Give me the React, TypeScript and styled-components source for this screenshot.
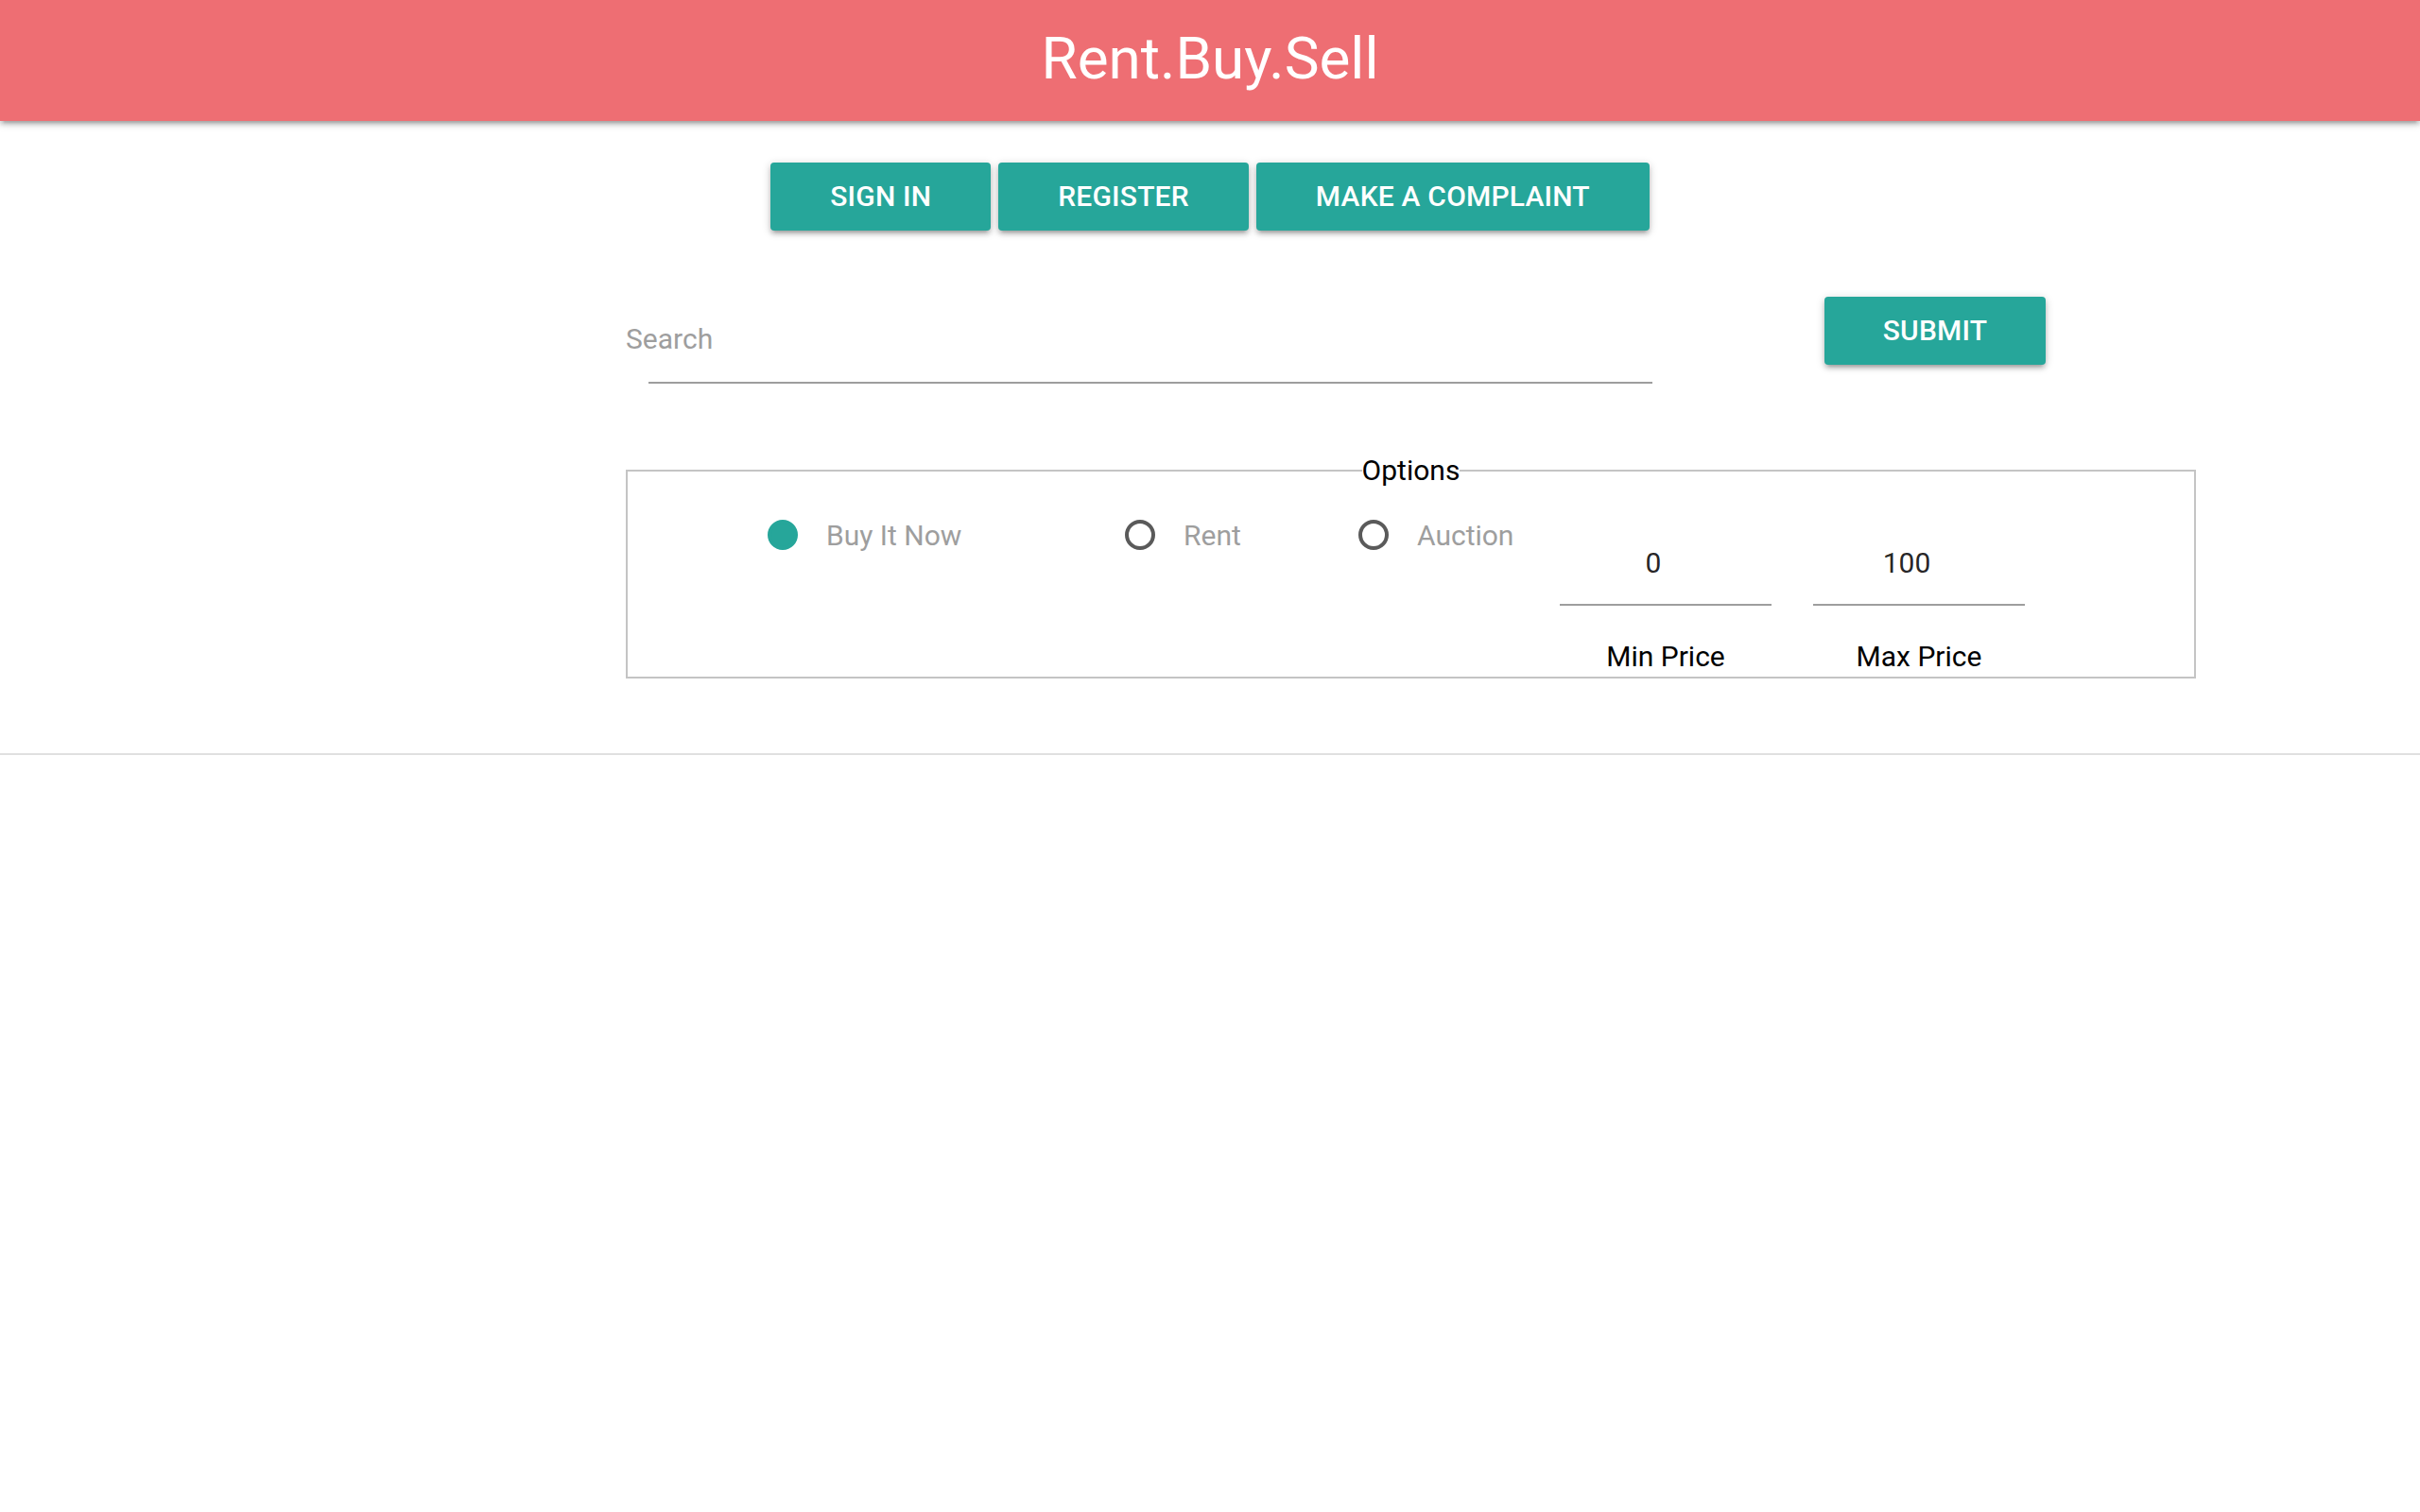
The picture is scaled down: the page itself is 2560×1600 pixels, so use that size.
import React from "react";
import styled, { createGlobalStyle } from "styled-components";

const GlobalStyle = createGlobalStyle`
  html, body {
    margin: 0;
    padding: 0;
    background: #ffffff;
    font-family: Roboto, "Liberation Sans", Arial, sans-serif;
    color: rgba(0, 0, 0, 0.87);
  }
  * { box-sizing: border-box; }
`;

const Page = styled.div`
  width: 2560px;
  min-height: 1600px;
  display: flex;
  flex-direction: column;
`;

const Header = styled.header`
  height: 128px;
  background: #ee6e73;
  display: flex;
  justify-content: center;
  align-items: center;
  box-shadow: 0 4px 4px 0 rgba(0, 0, 0, 0.14), 0 6px 2px -4px rgba(0, 0, 0, 0.12),
    0 2px 10px 0 rgba(0, 0, 0, 0.2);
  position: relative;
  z-index: 1;
`;

const Title = styled.h1`
  margin: 0 0 4px 0;
  font-size: 62px;
  font-weight: 400;
  line-height: 1;
  color: #ffffff;
`;

const ButtonRow = styled.nav`
  margin-top: 44px;
  display: flex;
  justify-content: center;
  gap: 8px;
`;

const Button = styled.button`
  height: 72px;
  padding: 0 63px;
  border: none;
  border-radius: 4px;
  background: #26a69a;
  color: #ffffff;
  font-family: Roboto, "Liberation Sans", Arial, sans-serif;
  font-size: 30px;
  font-weight: 500;
  letter-spacing: 0.2px;
  line-height: 72px;
  text-transform: uppercase;
  cursor: pointer;
  box-shadow: 0 4px 4px 0 rgba(0, 0, 0, 0.14), 0 6px 2px -4px rgba(0, 0, 0, 0.12),
    0 2px 10px 0 rgba(0, 0, 0, 0.2);
`;

const Content = styled.main`
  width: 1661px;
  margin-left: 662px;
  display: flex;
  flex-direction: column;
`;

const SearchRow = styled.form`
  margin-top: 70px;
  display: flex;
  align-items: flex-start;
`;

const SearchField = styled.div`
  width: 1086px;
  display: flex;
  flex-direction: column;
`;

const SearchLabel = styled.label`
  margin-top: 25px;
  font-size: 30px;
  line-height: 40px;
  color: #9e9e9e;
`;

const SearchInput = styled.input`
  margin-left: 24px;
  height: 27px;
  border: none;
  border-bottom: 2px solid #9e9e9e;
  outline: none;
  background: transparent;
  font-size: 30px;
  font-family: inherit;
`;

const SubmitButton = styled(Button)`
  margin-left: 182px;
  padding: 0;
  width: 234px;
`;

const Options = styled.fieldset`
  margin: 75px 0 0 0;
  padding: 26px 0 1px 0;
  border: 2px solid #c4c4c4;
  min-width: 0;
`;

const Legend = styled.legend`
  margin: 0 auto;
  padding: 0;
  font-size: 30px;
  line-height: 34px;
  color: #000000;
`;

const OptionsRow = styled.div`
  display: flex;
  align-items: flex-start;
  padding-left: 140px;
`;

const RadioOption = styled.label<{ $width: number }>`
  width: ${(p) => p.$width}px;
  display: flex;
  align-items: center;
  height: 50px;
  font-size: 30px;
  color: #9e9e9e;
  cursor: pointer;
`;

const RadioInput = styled.input`
  display: none;
`;

const RadioCircle = styled.span<{ $checked: boolean }>`
  width: 32px;
  height: 32px;
  margin: 0 30px 0 8px;
  border-radius: 50%;
  flex-shrink: 0;
  border: ${(p) => (p.$checked ? "4px solid #26a69a" : "4px solid #5a5a5a")};
  background: ${(p) => (p.$checked ? "#26a69a" : "transparent")};
`;

const PriceField = styled.div<{ $gap: number }>`
  width: 224px;
  margin-right: ${(p) => p.$gap}px;
  display: flex;
  flex-direction: column;
  align-items: stretch;
`;

const PriceInput = styled.input`
  height: 100px;
  padding: 10px 26px 0 0;
  border: none;
  border-bottom: 2px solid #9e9e9e;
  outline: none;
  background: transparent;
  font-family: inherit;
  font-size: 30px;
  color: rgba(0, 0, 0, 0.87);
  text-align: center;
`;

const PriceLabel = styled.label`
  margin-top: 34px;
  font-size: 30px;
  line-height: 40px;
  text-align: center;
  color: #000000;
`;

const Divider = styled.hr`
  margin: 79px 0 0 0;
  border: none;
  border-top: 2px solid #e0e0e0;
  width: 100%;
`;

const radios = [
  { label: "Buy It Now", width: 378 },
  { label: "Rent", width: 247 },
  { label: "Auction", width: 221 },
];

export default function App() {
  const [mode, setMode] = React.useState("Buy It Now");
  return (
    <Page>
      <GlobalStyle />
      <Header>
        <Title>Rent.Buy.Sell</Title>
      </Header>
      <ButtonRow>
        <Button>Sign In</Button>
        <Button>Register</Button>
        <Button>Make a Complaint</Button>
      </ButtonRow>
      <Content>
        <SearchRow onSubmit={(e) => e.preventDefault()}>
          <SearchField>
            <SearchLabel htmlFor="search">Search</SearchLabel>
            <SearchInput id="search" type="text" />
          </SearchField>
          <SubmitButton type="submit">Submit</SubmitButton>
        </SearchRow>
        <Options>
          <Legend>Options</Legend>
          <OptionsRow>
            {radios.map((r) => (
              <RadioOption key={r.label} $width={r.width}>
                <RadioInput
                  type="radio"
                  name="mode"
                  checked={mode === r.label}
                  onChange={() => setMode(r.label)}
                />
                <RadioCircle $checked={mode === r.label} />
                {r.label}
              </RadioOption>
            ))}
            <PriceField $gap={44}>
              <PriceInput id="min" type="text" defaultValue="0" />
              <PriceLabel htmlFor="min">Min Price</PriceLabel>
            </PriceField>
            <PriceField $gap={0}>
              <PriceInput id="max" type="text" defaultValue="100" />
              <PriceLabel htmlFor="max">Max Price</PriceLabel>
            </PriceField>
          </OptionsRow>
        </Options>
      </Content>
      <Divider />
    </Page>
  );
}
